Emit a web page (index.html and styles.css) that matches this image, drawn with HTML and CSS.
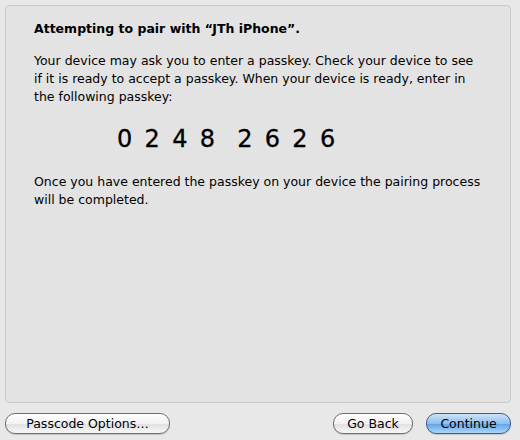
FILE: index.html
```html
<!DOCTYPE html>
<html lang="en">
<head>
    <meta charset="UTF-8">
    <title>Pair</title>
    <link rel="stylesheet" href="styles.css">
</head>
<body>
<div class="window">
    <div class="panel">
        <div class="title">Attempting to pair with “JTh iPhone”.</div>
        <p class="text">Your device may ask you to enter a passkey. Check your device to see if it is ready to accept a passkey. When your device is ready, enter in the following passkey:</p>
        <div class="passkey">0248 2626</div>
        <p class="text after">Once you have entered the passkey on your device the pairing process will be completed.</p>
    </div>
    <div class="buttons">
        <div class="btn wide">Passcode Options…</div>
        <div class="spacer"></div>
        <div class="btn back">Go Back</div>
        <div class="btn primary">Continue</div>
    </div>
</div>
</body>
</html>
```

FILE: styles.css
```css
html, body{
    margin: 0;
    padding: 0;
    background: #e8e8e8;
}
.window{
    width: 520px;
    height: 440px;
    padding: 5px 9px 0 5px;
    box-sizing: border-box;
    display: flex;
    flex-direction: column;
    font-family: "DejaVu Sans", sans-serif;
    font-size: 12.5px;
    color: #000;
}
.panel{
    height: 398px;
    box-sizing: border-box;
    background: #e3e3e3;
    border: 1px solid #c9c9c9;
    border-radius: 4px;
    padding: 14px 28px 0 28px;
}
.title{
    font-weight: bold;
    line-height: 18px;
}
.text{
    margin: 14px 0 0 0;
    line-height: 18px;
}
.passkey{
    margin: 18px 0 0 83px;
    font-size: 24px;
    letter-spacing: 12.3px;
    word-spacing: -10px;
    line-height: 30px;
    -webkit-text-stroke: 0.3px #000;
}
.text.after{
    margin-top: 19px;
}
.buttons{
    display: flex;
    gap: 13px;
    margin-top: 10px;
}
.spacer{
    flex: 1;
}
.btn{
    height: 19px;
    line-height: 19px;
    border: 1px solid #6e6e6e;
    border-radius: 10px;
    background: linear-gradient(#ffffff, #f2f2f2 50%, #e0e0e0 51%, #f7f7f7);
    text-align: center;
    font-size: 12.5px;
    box-shadow: 0 1px 1px rgba(0, 0, 0, 0.15);
}
.wide{
    width: 163px;
}
.back{
    width: 78px;
}
.primary{
    width: 83px;
    border-color: #3d5d8f;
    background: linear-gradient(#cde3f8, #8ebff0 50%, #5fa2e6 51%, #a9d7fb);
}
```
